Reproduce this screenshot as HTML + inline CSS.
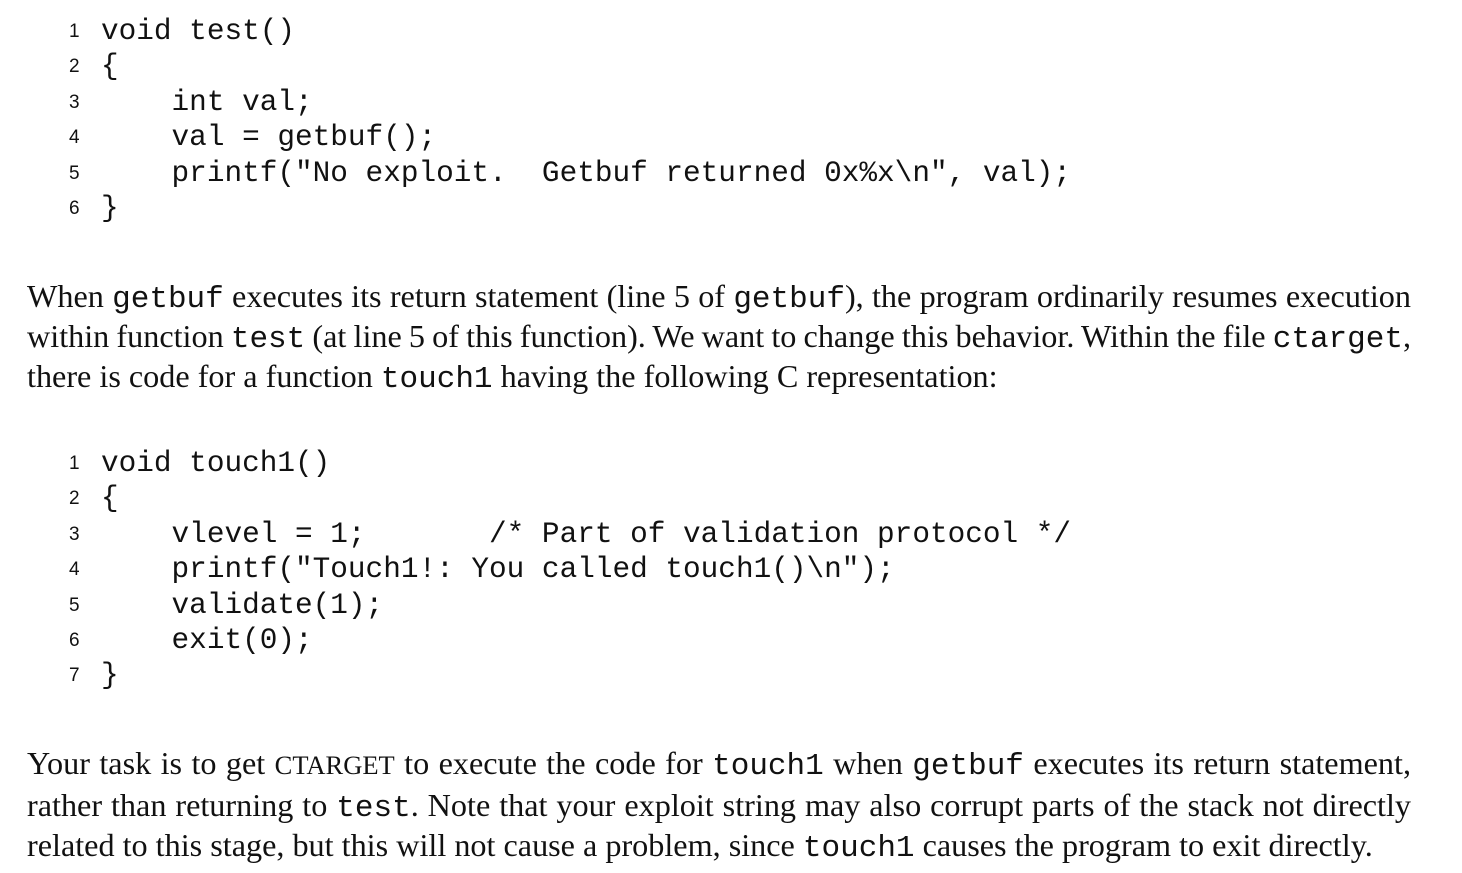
<!DOCTYPE html>
<html><head><meta charset="utf-8"><style>
body{margin:0;background:#fff;width:1462px;height:873px;overflow:hidden;position:relative;color:#111}
.code{position:absolute;left:0;font-family:"Liberation Mono",monospace;font-size:29.4px;}
.ln{position:absolute;height:35.4px;line-height:35.4px;white-space:pre}
.n{position:absolute;left:69px;font-size:19px;font-family:"Liberation Sans",sans-serif;}
.t{position:absolute;left:101px;}
.p{position:absolute;left:27px;width:1384px;margin:0;font-family:"Liberation Serif",serif;font-size:32.2px;line-height:40px;}
.p div{text-align:justify;text-align-last:justify;white-space:nowrap}
.p div.l{text-align-last:left}
.p div.s{word-spacing:-2px}
tt{font-family:"Liberation Mono",monospace;font-size:31px;line-height:0}
.sc{font-size:26.5px}
</style></head><body>
<div class="code" style="top:14px">
<div class="ln" style="top:0"><span class="n">1</span><span class="t">void test()</span></div>
<div class="ln" style="top:35.4px"><span class="n">2</span><span class="t">{</span></div>
<div class="ln" style="top:70.8px"><span class="n">3</span><span class="t">    int val;</span></div>
<div class="ln" style="top:106.2px"><span class="n">4</span><span class="t">    val = getbuf();</span></div>
<div class="ln" style="top:141.6px"><span class="n">5</span><span class="t">    printf("No exploit.  Getbuf returned 0x%x\n", val);</span></div>
<div class="ln" style="top:177px"><span class="n">6</span><span class="t">}</span></div>
</div>
<div class="p" style="top:276px">
<div>When <tt>getbuf</tt> executes its return statement (line 5 of <tt>getbuf</tt>), the program ordinarily resumes execution</div>
<div class="s">within function <tt>test</tt> (at line 5 of this function). We want to change this behavior. Within the file <tt>ctarget</tt>,</div>
<div class="l">there is code for a function <tt>touch1</tt> having the following C representation:</div>
</div>
<div class="code" style="top:446px">
<div class="ln" style="top:0"><span class="n">1</span><span class="t">void touch1()</span></div>
<div class="ln" style="top:35.4px"><span class="n">2</span><span class="t">{</span></div>
<div class="ln" style="top:70.8px"><span class="n">3</span><span class="t">    vlevel = 1;       /* Part of validation protocol */</span></div>
<div class="ln" style="top:106.2px"><span class="n">4</span><span class="t">    printf("Touch1!: You called touch1()\n");</span></div>
<div class="ln" style="top:141.6px"><span class="n">5</span><span class="t">    validate(1);</span></div>
<div class="ln" style="top:177px"><span class="n">6</span><span class="t">    exit(0);</span></div>
<div class="ln" style="top:212.4px"><span class="n">7</span><span class="t">}</span></div>
</div>
<div class="p" style="top:743px">
<div>Your task is to get <span class="sc">CTARGET</span> to execute the code for <tt>touch1</tt> when <tt>getbuf</tt> executes its return statement,</div>
<div>rather than returning to <tt>test</tt>. Note that your exploit string may also corrupt parts of the stack not directly</div>
<div class="l">related to this stage, but this will not cause a problem, since <tt>touch1</tt> causes the program to exit directly.</div>
</div>
</body></html>
